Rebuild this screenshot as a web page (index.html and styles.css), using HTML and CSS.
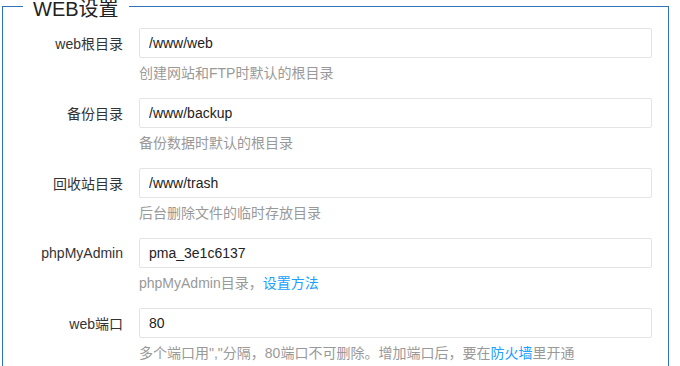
FILE: index.html
```html
<!DOCTYPE html>
<html lang="zh-CN">
<head>
  <meta charset="UTF-8">
  <title>WEB设置</title>
  <link rel="stylesheet" href="styles.css">
</head>
<body>
  <fieldset class="setting-box">
    <legend>WEB设置</legend>

    <div class="line">
      <span class="tname">web根目录</span>
      <input class="bt-input" type="text" value="/www/web">
    </div>
    <p class="tips">创建网站和FTP时默认的根目录</p>

    <div class="line">
      <span class="tname">备份目录</span>
      <input class="bt-input" type="text" value="/www/backup">
    </div>
    <p class="tips">备份数据时默认的根目录</p>

    <div class="line">
      <span class="tname">回收站目录</span>
      <input class="bt-input" type="text" value="/www/trash">
    </div>
    <p class="tips">后台删除文件的临时存放目录</p>

    <div class="line">
      <span class="tname">phpMyAdmin</span>
      <input class="bt-input" type="text" value="pma_3e1c6137">
    </div>
    <p class="tips">phpMyAdmin目录，<a href="#">设置方法</a></p>

    <div class="line">
      <span class="tname">web端口</span>
      <input class="bt-input" type="text" value="80">
    </div>
    <p class="tips">多个端口用","分隔，80端口不可删除。增加端口后，要在<a href="#">防火墙</a>里开通</p>
  </fieldset>
</body>
</html>
```

FILE: styles.css
```css
body {
  margin: 0;
  font-family: "Liberation Sans", "Noto Sans CJK SC", sans-serif;
  font-size: 14px;
  color: #333;
  background: #fff;
}

.setting-box {
  margin: -7px 0 0 2px;
  width: 667px;
  box-sizing: border-box;
  border: 1px solid #2f73b8;
  padding: 9px 16px 10px 20px;
}

.setting-box legend {
  padding: 6px 10px 0;
  font-size: 20px;
  line-height: 20px;
  color: #222;
}

.line {
  display: flex;
  align-items: center;
}

.tname {
  width: 100px;
  margin-right: 16px;
  text-align: right;
  color: #333;
}

.bt-input {
  flex: 1;
  height: 30px;
  box-sizing: border-box;
  border: 1px solid #e4e4e4;
  border-radius: 2px;
  padding: 0 9px;
  font-family: inherit;
  font-size: 14px;
  color: #222;
  outline: none;
}

.tips {
  margin: 5px 0 15px 116px;
  line-height: 20px;
  color: #999;
}

.tips a {
  color: #20a0ff;
  text-decoration: none;
}
```
